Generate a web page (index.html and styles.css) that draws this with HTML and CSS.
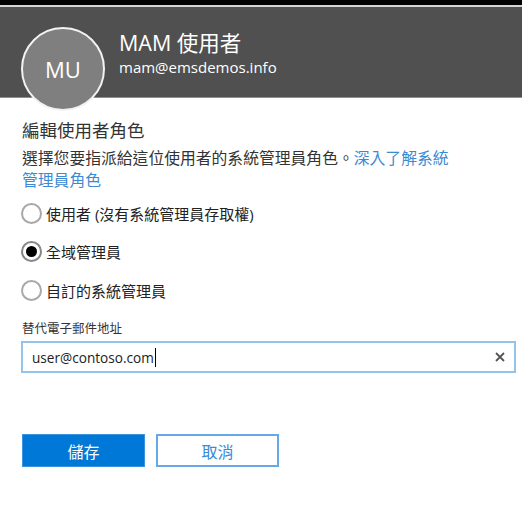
FILE: index.html
```html
<!DOCTYPE html>
<html lang="zh-Hant">
<head>
<meta charset="utf-8">
<link rel="stylesheet" href="styles.css">
</head>
<body>
<div class="topbar"></div>
<header class="header">
  <div class="avatar">MU</div>
  <div class="who">
    <div class="name">MAM 使用者</div>
    <div class="email">mam@emsdemos.info</div>
  </div>
</header>
<main class="content">
  <h1 class="title">編輯使用者角色</h1>
  <p class="desc">選擇您要指派給這位使用者的系統管理員角色。<a class="link">深入了解系統管理員角色</a></p>
  <div class="radios">
    <label class="radio"><span class="dot"></span><span>使用者 (沒有系統管理員存取權)</span></label>
    <label class="radio checked"><span class="dot"></span><span>全域管理員</span></label>
    <label class="radio"><span class="dot"></span><span>自訂的系統管理員</span></label>
  </div>
  <div class="field-label">替代電子郵件地址</div>
  <div class="input">
    <span class="value">user@contoso.com</span><span class="caret"></span>
    <svg class="clear" width="10" height="10" viewBox="0 0 10 10"><path d="M1 1L9 9M9 1L1 9" stroke="#555" stroke-width="1.8"/></svg>
  </div>
  <div class="buttons">
    <button class="btn primary">儲存</button>
    <button class="btn secondary">取消</button>
  </div>
</main>
</body>
</html>
```
FILE: styles.css
```css
html, body {
  margin: 0;
  padding: 0;
  background: #fff;
}
body {
  width: 522px;
  height: 529px;
  overflow: hidden;
  font-family: "Open Sans", "Noto Sans CJK TC", sans-serif;
  color: #333;
}
.topbar {
  height: 5px;
  background: #000;
  border-bottom: 2px solid #d4d4d4;
}
.header {
  height: 91px;
  background: #505050;
  border-bottom: 1px solid #8f8f8f;
  display: flex;
  align-items: flex-start;
  padding-left: 21px;
  box-sizing: border-box;
}
.avatar {
  width: 84px;
  height: 84px;
  margin-top: 20px;
  border-radius: 50%;
  background: #7f7f7f;
  border: 2px solid #f2f2f2;
  box-sizing: border-box;
  color: #fff;
  font-size: 22px;
  display: flex;
  align-items: center;
  justify-content: center;
  flex-shrink: 0;
  position: relative;
  z-index: 1;
}
.who {
  margin-left: 14px;
  margin-top: 22px;
  color: #fff;
}
.name {
  font-size: 21.5px;
  line-height: 28px;
}
.email {
  font-size: 15px;
  line-height: 20px;
  margin-top: 0px;
}
.content {
  padding: 0 7px 0 22px;
}
.title {
  margin: 19px 0 0;
  font-weight: normal;
  font-size: 17.5px;
  line-height: 26px;
  color: #333;
}
.desc {
  margin: 4px 0 0;
  font-size: 15.8px;
  line-height: 22px;
  width: 440px;
  color: #333;
}
.link {
  color: #3c8ad2;
}
.radios {
  margin-top: 11px;
  display: flex;
  flex-direction: column;
  gap: 16.5px;
}
.radio {
  display: flex;
  align-items: center;
  height: 22px;
  font-size: 15px;
  color: #222;
  margin-left: -1px;
}
.dot {
  width: 21px;
  height: 21px;
  border: 2px solid #a8a8a8;
  border-radius: 50%;
  box-sizing: border-box;
  margin-right: 4px;
  display: flex;
  align-items: center;
  justify-content: center;
}
.checked .dot {
  border-color: #888;
}
.checked .dot::after {
  content: "";
  width: 11px;
  height: 11px;
  border-radius: 50%;
  background: #000;
}
.field-label {
  margin-top: 19px;
  font-size: 12.5px;
  line-height: 18px;
  color: #333;
}
.input {
  margin-top: 3px;
  margin-left: -1px;
  width: 495px;
  height: 32px;
  border: 2px solid #94c4ec;
  box-sizing: border-box;
  display: flex;
  align-items: center;
  padding: 0 9px;
  font-size: 13.6px;
  color: #222;
}
.caret {
  width: 1px;
  height: 19px;
  background: #000;
  margin-left: 1px;
}
.clear {
  margin-left: auto;
  margin-right: 0px;
}
.buttons {
  margin-top: 61px;
  display: flex;
  gap: 11px;
}
.btn {
  width: 123px;
  height: 33px;
  font-family: "Open Sans", "Noto Sans CJK TC", sans-serif;
  font-size: 16px;
  box-sizing: border-box;
  padding: 0;
}
.primary {
  background: #0078d7;
  color: #fff;
  border: 1px solid #3d94de;
}
.secondary {
  background: #fff;
  color: #3a8ad6;
  border: 2px solid #66a9e6;
}
```
